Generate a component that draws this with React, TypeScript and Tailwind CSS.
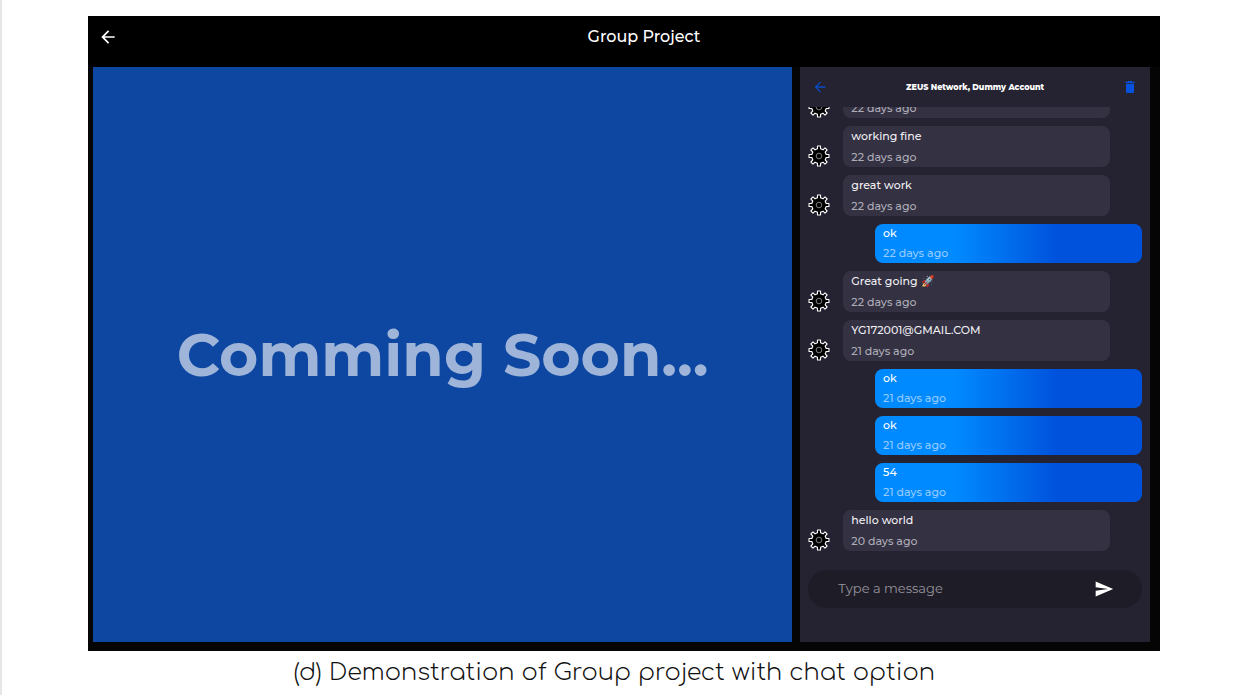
import { FormEvent, useState } from "react";
import { MdArrowBack, MdDelete, MdSend } from "react-icons/md";

type Message = { id: number; text?: string; time: string; mine?: boolean };

const messages: Message[] = [
  { id: 1, time: "22 days ago" },
  { id: 2, text: "working fine", time: "22 days ago" },
  { id: 3, text: "great work", time: "22 days ago" },
  { id: 4, text: "ok", time: "22 days ago", mine: true },
  { id: 5, text: "Great going 🚀", time: "22 days ago" },
  { id: 6, text: "YG172001@GMAIL.COM", time: "21 days ago" },
  { id: 7, text: "ok", time: "21 days ago", mine: true },
  { id: 8, text: "ok", time: "21 days ago", mine: true },
  { id: 9, text: "54", time: "21 days ago", mine: true },
  { id: 10, text: "hello world", time: "20 days ago" },
];

function gearPath(teeth: number, outer: number, inner: number) {
  const step = (Math.PI * 2) / teeth;
  const points: string[] = [];
  for (let i = 0; i < teeth; i++) {
    const mid = i * step - Math.PI / 2;
    const corners: [number, number][] = [
      [inner, -0.27],
      [outer, -0.19],
      [outer, 0.19],
      [inner, 0.27],
    ];
    for (const [r, t] of corners) {
      const a = mid + t * step;
      points.push(`${(12 + r * Math.cos(a)).toFixed(2)} ${(12 + r * Math.sin(a)).toFixed(2)}`);
    }
  }
  return `M${points.join("L")}Z`;
}

const GEAR = gearPath(8, 11, 8);

function GearAvatar() {
  return (
    <svg viewBox="0 0 24 24" className="size-[22px] shrink-0" aria-hidden="true">
      <path d={GEAR} fill="#000" stroke="#fff" strokeWidth="1.2" strokeLinejoin="round" />
      <circle cx="12" cy="12" r="3.1" fill="none" stroke="#8a8a8a" strokeWidth="1" />
    </svg>
  );
}

function MessageRow({ message }: { message: Message }) {
  if (message.mine) {
    return (
      <li className="flex shrink-0 justify-end">
        <div className="flex w-4/5 flex-col gap-px rounded-lg bg-linear-to-r from-[#008aff] from-30% to-[#0052dc] to-68% px-2 text-[11px] leading-[19px] font-medium">
          <p className="text-white">{message.text}</p>
          <p className="text-[#95caff]">{message.time}</p>
        </div>
      </li>
    );
  }
  return (
    <li className="flex shrink-0 items-end gap-[13px]">
      <GearAvatar />
      <div className="flex w-4/5 flex-col gap-px rounded-lg bg-[#343143] px-2 text-[11px] leading-5 font-medium">
        {message.text && <p className="text-[#f0f0f3]">{message.text}</p>}
        <p className="text-[#aeadb7]">{message.time}</p>
      </div>
    </li>
  );
}

function ChatPanel() {
  const [draft, setDraft] = useState("");
  const onSubmit = (e: FormEvent) => {
    e.preventDefault();
    setDraft("");
  };
  return (
    <section className="flex min-w-0 flex-col bg-[#252331] px-2 pb-[34px]">
      <header className="flex h-10 shrink-0 items-center justify-between px-1">
        <button type="button" aria-label="Back to chats" className="text-[#0a4bc8]">
          <MdArrowBack size={16} />
        </button>
        <h2 className="text-[8px] font-extrabold text-white">ZEUS Network, Dummy Account</h2>
        <button type="button" aria-label="Delete chat" className="text-[#0652dd]">
          <MdDelete size={16} />
        </button>
      </header>
      <ul className="flex h-0 grow flex-col justify-end gap-2 overflow-hidden">
        {messages.map((m) => (
          <MessageRow key={m.id} message={m} />
        ))}
      </ul>
      <form
        onSubmit={onSubmit}
        className="mt-[19px] flex h-[38px] shrink-0 items-center rounded-full bg-[#1e1c26] pr-7 pl-[30px]"
      >
        <input
          aria-label="Message"
          value={draft}
          onChange={(e) => setDraft(e.target.value)}
          placeholder="Type a message"
          className="min-w-0 flex-1 bg-transparent text-[13px] text-white outline-none placeholder:text-[#96949e]"
        />
        <button type="submit" aria-label="Send" className="text-white">
          <MdSend size={20} />
        </button>
      </form>
    </section>
  );
}

export default function App() {
  return (
    <div className="flex min-h-screen flex-col border-l-2 border-[#e6e6e6] bg-white pt-4 pr-[85px] pl-[86px] font-['Montserrat','Inter',sans-serif]">
      <main className="flex flex-1 flex-col bg-[#050505]">
        <header className="flex h-[51px] shrink-0 items-center bg-black pb-[10px]">
          <button type="button" aria-label="Back" className="flex w-10 justify-center text-white">
            <MdArrowBack size={20} />
          </button>
          <h1 className="flex-1 text-center text-base font-medium text-white">Group Project</h1>
        </header>
        <div className="grid flex-1 grid-cols-[2fr_1fr] gap-2 pr-[10px] pb-[9px] pl-[5px]">
          <section className="flex min-w-0 items-center justify-center bg-[#0d47a1]">
            <p className="text-[60px] leading-none font-bold text-[#9eb5d9]">Comming Soon...</p>
          </section>
          <ChatPanel />
        </div>
      </main>
      <p className="h-11 shrink-0 pr-5 text-center font-['Comfortaa','Quicksand',sans-serif] text-2xl leading-[44px] font-light text-[#111]">
        (d) Demonstration of Group project with chat option
      </p>
    </div>
  );
}
